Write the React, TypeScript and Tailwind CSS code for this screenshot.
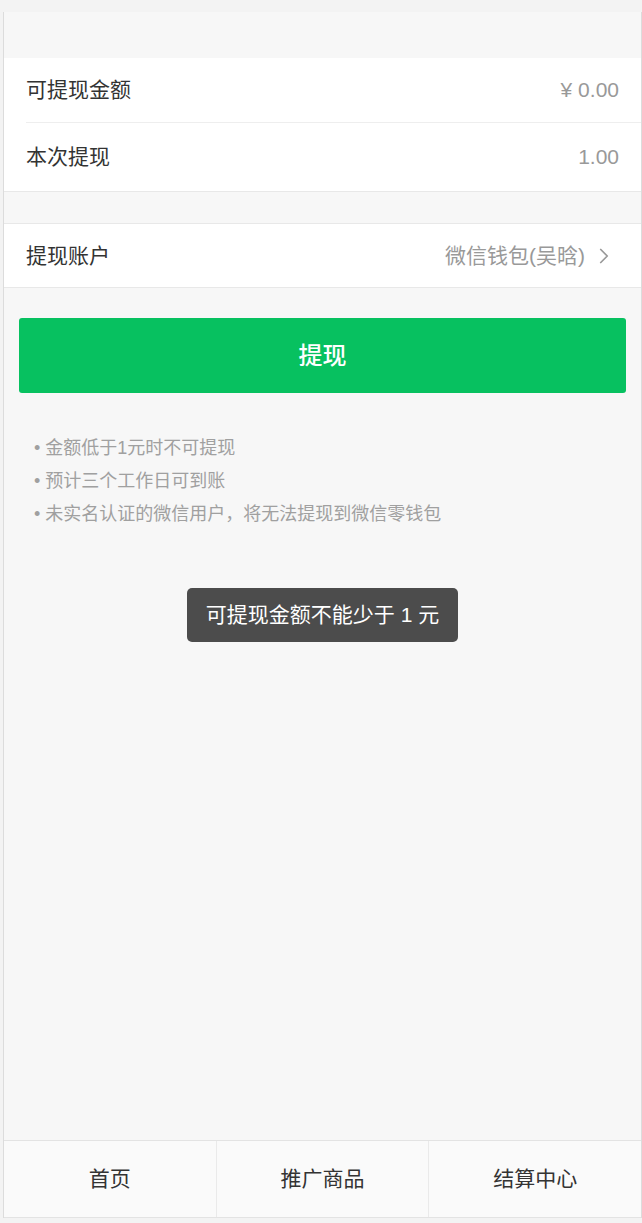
import { ChevronRight } from "lucide-react";

const font = { fontFamily: '"Liberation Sans", "Noto Sans CJK SC", sans-serif' };

const tips = ["金额低于1元时不可提现", "预计三个工作日可到账", "未实名认证的微信用户，将无法提现到微信零钱包"];

const tabs = ["首页", "推广商品", "结算中心"];

const App = () => {
    return (
        <div className="w-[642px] h-[1223px] bg-[#f3f3f3] pt-[12px] pl-[3px] pb-[5px]" style={font}>
            <div className="h-full flex flex-col bg-[#f7f7f7] border-l border-r border-[#dcdcdc]">
                <div className="h-[46px] shrink-0" />

                {/* amounts */}
                <div className="bg-white border-b border-[#e8e8e8]">
                    <div className="h-[64px] flex items-center justify-between pl-[22px] pr-[22px]">
                        <span className="text-[21px] text-[#333]">可提现金额</span>
                        <span className="text-[21px] text-[#999]">¥ 0.00</span>
                    </div>
                    <div className="ml-[22px] h-px bg-[#eeeeee]" />
                    <div className="h-[68px] flex items-center justify-between pl-[22px] pr-[22px]">
                        <span className="text-[21px] text-[#333]">本次提现</span>
                        <span className="text-[21px] text-[#999]">1.00</span>
                    </div>
                </div>

                <div className="h-[31px] shrink-0" />

                {/* account */}
                <div className="h-[65px] bg-white border-t border-b border-[#e8e8e8] flex items-center justify-between pl-[22px] pr-[24px]">
                    <span className="text-[21px] text-[#333]">提现账户</span>
                    <div className="flex items-center gap-[6px]">
                        <span className="text-[21px] text-[#999]">微信钱包(吴晗)</span>
                        <ChevronRight className="w-[26px] h-[26px] text-[#999] stroke-[1.6]" />
                    </div>
                </div>

                <div className="px-[15px] pt-[30px]">
                    <button className="w-full h-[75px] rounded-[3px] bg-[#07c160] text-white text-[24px] font-medium">
                        提现
                    </button>
                </div>

                <ul className="pl-[30px] pt-[42px] flex flex-col gap-[7px]">
                    {tips.map((t) => (
                        <li key={t} className="text-[18px] leading-[26px] text-[#a0a0a0] flex gap-[5px]">
                            <span>•</span>
                            <span>{t}</span>
                        </li>
                    ))}
                </ul>

                <div className="flex justify-center pt-[61px]">
                    <div className="h-[54px] px-[19px] rounded-[5px] bg-[#4c4c4c] text-white text-[21px] flex items-center">
                        可提现金额不能少于 1 元
                    </div>
                </div>

                <div className="flex-1" />

                {/* tab bar */}
                <div className="h-[78px] shrink-0 flex bg-[#fafafa] border-t border-b border-[#e3e3e3]">
                    {tabs.map((t, i) => (
                        <div
                            key={t}
                            className={`flex-1 flex items-center justify-center text-[21px] text-[#333] ${i > 0 ? "border-l border-[#eaeaea]" : ""}`}
                        >
                            {t}
                        </div>
                    ))}
                </div>
            </div>
        </div>
    );
};

export default App;
